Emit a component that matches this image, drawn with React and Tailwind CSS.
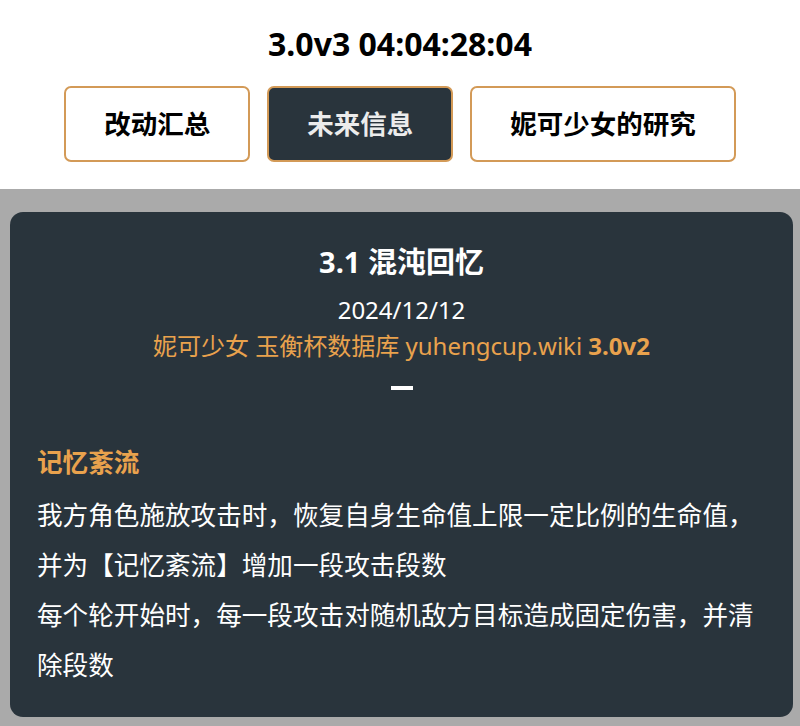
import React from "react"

const FONT = { fontFamily: "'Noto Sans', 'Noto Sans CJK SC', sans-serif" }

const TABS = [
  { label: "改动汇总", active: false },
  { label: "未来信息", active: true },
  { label: "妮可少女的研究", active: false },
]

export default function App() {
  return (
    <div className="min-h-screen bg-[#aaaaaa]" style={FONT}>
      {/* header */}
      <div className="bg-white pt-[22px] pb-[27px]">
        <h1 className="text-center text-[32px] leading-[44px] font-bold text-black">3.0v3 04:04:28:04</h1>
        <div className="mt-[20px] flex justify-center gap-[17px]">
          {TABS.map(t => (
            <button
              key={t.label}
              className={
                t.active
                  ? "rounded-[7px] border-2 border-[#d39a57] bg-[#29343c] px-[38px] py-[20px] text-[26.5px] leading-[32px] font-bold text-[#ececec]"
                  : "rounded-[7px] border-2 border-[#d39a57] bg-white px-[38px] py-[20px] text-[26.5px] leading-[32px] font-bold text-black"
              }
            >
              {t.label}
            </button>
          ))}
        </div>
      </div>

      {/* card */}
      <div className="pt-[23px] pb-[8px] pl-[10px] pr-[7px]">
        <div className="rounded-[13px] bg-[#29343c] px-[27px] pt-[28px] pb-[26px] text-white">
          <h2 className="text-center text-[29px] leading-[44px] font-bold">3.1 混沌回忆</h2>
          <p className="mt-2 text-center text-[24px] leading-[36px]">2024/12/12</p>
          <p className="text-center text-[24px] leading-[36px] text-[#e9a24d]">
            妮可少女 玉衡杯数据库 yuhengcup.wiki <span className="font-bold">3.0v2</span>
          </p>
          <div className="mx-auto mt-[22px] h-[4px] w-[22px] bg-white" />

          <h3 className="mt-[48px] text-[25.6px] leading-[50px] font-bold text-[#e9a24d]">记忆紊流</h3>
          <div className="mt-[3px] text-[25.6px] leading-[50px]">
            <p>我方角色施放攻击时，恢复自身生命值上限一定比例的生命值，并为【记忆紊流】增加一段攻击段数</p>
            <p>每个轮开始时，每一段攻击对随机敌方目标造成固定伤害，并清除段数</p>
          </div>
        </div>
      </div>
    </div>
  )
}
